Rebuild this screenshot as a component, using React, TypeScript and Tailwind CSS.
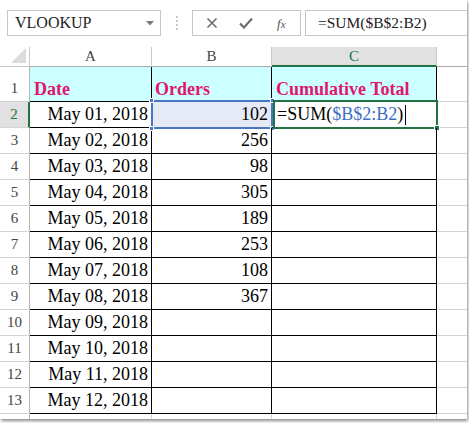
import React from "react";

const dates = [
  "May 01, 2018",
  "May 02, 2018",
  "May 03, 2018",
  "May 04, 2018",
  "May 05, 2018",
  "May 06, 2018",
  "May 07, 2018",
  "May 08, 2018",
  "May 09, 2018",
  "May 10, 2018",
  "May 11, 2018",
  "May 12, 2018",
];
const orders = ["102", "256", "98", "305", "189", "253", "108", "367", "", "", "", ""];

function Corner({ cls }: { cls: string }) {
  return <div className={`absolute w-[5px] h-[5px] bg-[#4a76c0] border border-white ${cls}`} />;
}

export default function App() {
  return (
    <div className="w-[469px] h-[423px] bg-white overflow-hidden font-['Liberation_Serif',serif]">
      <div className="w-[467px] h-[419px] bg-white shadow-[1px_2px_3px_rgba(0,0,0,0.45)] flex flex-col overflow-hidden">
        {/* Formula bar */}
        <div className="h-[47px] shrink-0 flex items-start pt-[10px] pl-[7px]">
          <div className="w-[154px] h-[26px] border border-[#c6c6c6] flex items-center pl-[7px] pr-[6px] text-[16px] text-[#222]">
            <span className="flex-1 leading-none">VLOOKUP</span>
            <svg width="8" height="5" viewBox="0 0 8 5">
              <path d="M0 0 L8 0 L4 4.5 Z" fill="#7a7a7a" />
            </svg>
          </div>
          <div className="w-[31px] h-[26px] flex flex-col items-center justify-center gap-[2px]">
            <div className="w-[2px] h-[2px] bg-[#c8c8c8]" />
            <div className="w-[2px] h-[2px] bg-[#c8c8c8]" />
            <div className="w-[2px] h-[2px] bg-[#c8c8c8]" />
            <div className="w-[2px] h-[2px] bg-[#c8c8c8]" />
          </div>
          <div className="w-[109px] h-[26px] border border-[#c6c6c6] flex items-center pl-[13px]">
            <svg width="12" height="12" viewBox="0 0 12 12">
              <path d="M1.5 1.5 L10.5 10.5 M10.5 1.5 L1.5 10.5" stroke="#6e6e6e" strokeWidth="1.6" />
            </svg>
            <svg width="14" height="12" viewBox="0 0 14 12" className="ml-[21px]">
              <path d="M1 6.5 L5 10.5 L13 1.5" stroke="#6e6e6e" strokeWidth="2.2" fill="none" />
            </svg>
            <span className="ml-[24px] italic text-[13px] text-[#555] leading-none">
              f<span className="text-[11px]">x</span>
            </span>
          </div>
          <div className="ml-[4px] flex-1 h-[26px] border border-[#c6c6c6] border-r-0 flex items-center pl-[12px] text-[15.5px] text-[#222] leading-none">
            =SUM($B$2:B2)
          </div>
        </div>

        {/* Grid */}
        <div className="flex-1 grid grid-cols-[30px_122px_120px_165px_1fr] grid-rows-[20px_35px_repeat(12,26px)_1fr] text-[18px] leading-none text-black">
          {/* header row */}
          <div className="relative bg-white border-r border-b border-[#c9c9c9]">
            <svg className="absolute right-[3px] bottom-[3px]" width="15" height="15" viewBox="0 0 15 15">
              <path d="M15 0 L15 15 L0 15 Z" fill="#dcdcdc" />
            </svg>
          </div>
          <div className="bg-white border-r border-b border-[#c9c9c9] border-b-[#ababab] flex items-center justify-center text-[15px] text-[#444]">A</div>
          <div className="bg-white border-r border-b border-[#c9c9c9] border-b-[#ababab] flex items-center justify-center text-[15px] text-[#444]">B</div>
          <div className="bg-[#e1e1e1] border-r border-[#c9c9c9] border-b-2 border-b-[#217346] flex items-center justify-center text-[15px] text-[#217346]">C</div>
          <div className="bg-white border-b border-[#c9c9c9] border-b-[#ababab]" />

          {/* row 1 */}
          <div className="bg-white border-r border-r-[#b5b5b5] border-b border-b-[#d4d4d4] flex items-end justify-center pb-[5px] text-[15px] text-[#444]">1</div>
          <div className="bg-[#ccffff] border-r border-b border-black flex items-end pl-[4px] pb-[3px] font-bold text-[#e0166f]">Date</div>
          <div className="bg-[#ccffff] border-r border-b border-black flex items-end pl-[3px] pb-[3px] font-bold text-[#e0166f]">Orders</div>
          <div className="bg-[#ccffff] border-r border-b border-black flex items-end pl-[4px] pb-[3px] font-bold text-[#e0166f]">Cumulative Total</div>
          <div className="border-b border-[#d4d4d4]" />

          {dates.map((d, i) => {
            const row = i + 2;
            const sel = row === 2;
            return (
              <React.Fragment key={row}>
                <div
                  className={
                    sel
                      ? "bg-[#e1e1e1] border-r-2 border-r-[#217346] border-b border-b-[#d4d4d4] flex items-end justify-center pb-[5px] text-[15px] text-[#217346]"
                      : "bg-white border-r border-r-[#b5b5b5] border-b border-b-[#d4d4d4] flex items-end justify-center pb-[5px] text-[15px] text-[#444]"
                  }
                >
                  {row}
                </div>
                <div className="border-r border-b border-black flex items-end justify-end pr-[3px] pb-[4px]">{d}</div>
                <div
                  className={`relative border-r border-b border-black flex items-end justify-end pr-[3px] pb-[4px] ${
                    sel ? "bg-[#e6eaf6]" : ""
                  }`}
                >
                  {orders[i]}
                  {sel && (
                    <div className="absolute left-[-1px] top-[-2px] right-[-2px] bottom-[-2px] border-2 border-[#4a76c0] pointer-events-none">
                      <Corner cls="left-[-4px] top-[-4px]" />
                      <Corner cls="right-[-4px] top-[-4px]" />
                      <Corner cls="left-[-4px] bottom-[-4px]" />
                      <Corner cls="right-[-4px] bottom-[-4px]" />
                    </div>
                  )}
                </div>
                <div className="relative border-r border-b border-black flex items-end pl-[5px] pb-[4px]">
                  {sel && (
                    <>
                      <span>=SUM(</span>
                      <span className="text-[#3d6fc2]">$B$2:B2</span>
                      <span>)</span>
                      <span className="inline-block w-[1px] h-[20px] bg-black ml-[2px] mb-[-2px]" />
                      <div className="absolute left-[1px] top-[-2px] right-[-2px] bottom-[-2px] border-2 border-[#217346] pointer-events-none">
                        <div className="absolute right-[-4px] bottom-[-4px] w-[6px] h-[6px] bg-[#217346] border border-white" />
                      </div>
                    </>
                  )}
                </div>
                <div className="border-b border-[#d4d4d4]" />
              </React.Fragment>
            );
          })}

          {/* partial row 14 */}
          <div className="border-r border-[#b5b5b5]" />
          <div className="border-r border-[#d4d4d4]" />
          <div className="border-r border-[#d4d4d4]" />
          <div className="border-r border-[#d4d4d4]" />
          <div />
        </div>
      </div>
    </div>
  );
}
